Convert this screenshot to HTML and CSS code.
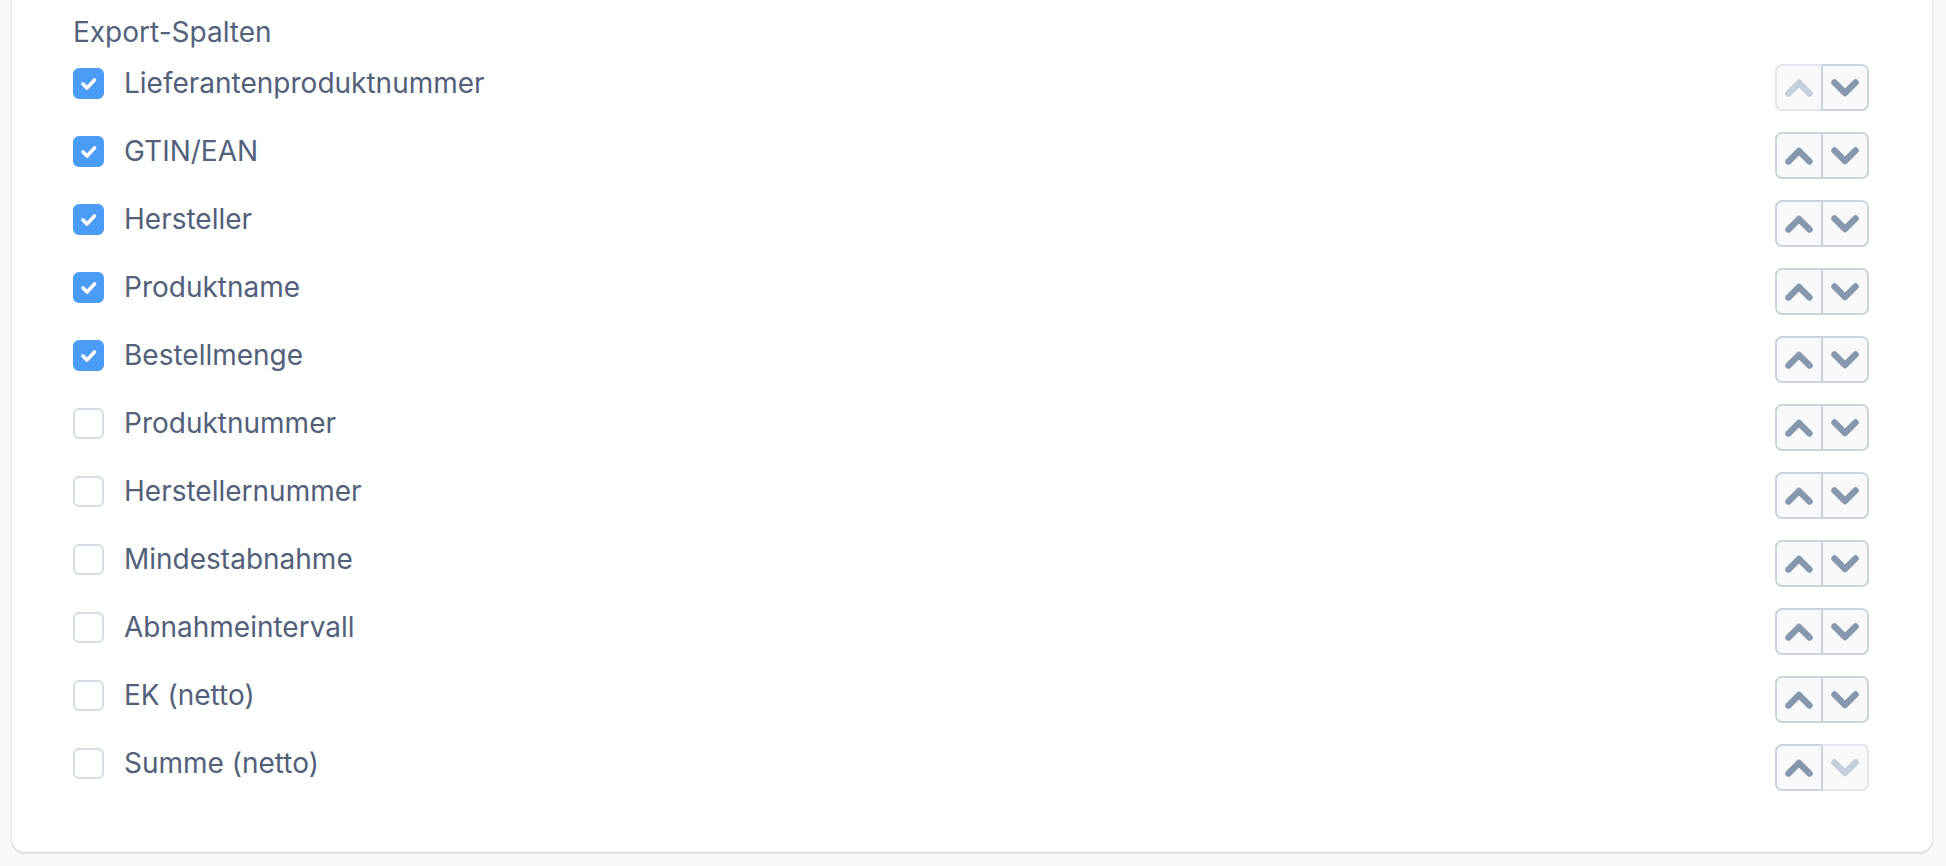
FILE: index.html
```html
<!DOCTYPE html>
<html lang="de">
<head>
<meta charset="utf-8">
<title>Export-Spalten</title>
<link rel="stylesheet" href="styles.css">
</head>
<body>
<div class="card">
  <div class="heading">Export-Spalten</div>
  <ul class="list">
    <li class="row">
      <label class="item"><span class="box checked"><svg viewBox="0 0 31 31" width="31" height="31"><polyline points="10,16 14,20 21.5,12" /></svg></span><span class="text">Lieferantenproduktnummer</span></label>
      <div class="order"><button class="btn disabled"><svg viewBox="0 0 28 18" width="28" height="18"><polyline points="3.5,14.5 14,4 24.5,14.5"/></svg></button><button class="btn"><svg viewBox="0 0 28 18" width="28" height="18"><polyline points="3.5,3.5 14,14 24.5,3.5"/></svg></button></div>
    </li>
    <li class="row">
      <label class="item"><span class="box checked"><svg viewBox="0 0 31 31" width="31" height="31"><polyline points="10,16 14,20 21.5,12" /></svg></span><span class="text">GTIN/EAN</span></label>
      <div class="order"><button class="btn"><svg viewBox="0 0 28 18" width="28" height="18"><polyline points="3.5,14.5 14,4 24.5,14.5"/></svg></button><button class="btn"><svg viewBox="0 0 28 18" width="28" height="18"><polyline points="3.5,3.5 14,14 24.5,3.5"/></svg></button></div>
    </li>
    <li class="row">
      <label class="item"><span class="box checked"><svg viewBox="0 0 31 31" width="31" height="31"><polyline points="10,16 14,20 21.5,12" /></svg></span><span class="text">Hersteller</span></label>
      <div class="order"><button class="btn"><svg viewBox="0 0 28 18" width="28" height="18"><polyline points="3.5,14.5 14,4 24.5,14.5"/></svg></button><button class="btn"><svg viewBox="0 0 28 18" width="28" height="18"><polyline points="3.5,3.5 14,14 24.5,3.5"/></svg></button></div>
    </li>
    <li class="row">
      <label class="item"><span class="box checked"><svg viewBox="0 0 31 31" width="31" height="31"><polyline points="10,16 14,20 21.5,12" /></svg></span><span class="text">Produktname</span></label>
      <div class="order"><button class="btn"><svg viewBox="0 0 28 18" width="28" height="18"><polyline points="3.5,14.5 14,4 24.5,14.5"/></svg></button><button class="btn"><svg viewBox="0 0 28 18" width="28" height="18"><polyline points="3.5,3.5 14,14 24.5,3.5"/></svg></button></div>
    </li>
    <li class="row">
      <label class="item"><span class="box checked"><svg viewBox="0 0 31 31" width="31" height="31"><polyline points="10,16 14,20 21.5,12" /></svg></span><span class="text">Bestellmenge</span></label>
      <div class="order"><button class="btn"><svg viewBox="0 0 28 18" width="28" height="18"><polyline points="3.5,14.5 14,4 24.5,14.5"/></svg></button><button class="btn"><svg viewBox="0 0 28 18" width="28" height="18"><polyline points="3.5,3.5 14,14 24.5,3.5"/></svg></button></div>
    </li>
    <li class="row">
      <label class="item"><span class="box"></span><span class="text">Produktnummer</span></label>
      <div class="order"><button class="btn"><svg viewBox="0 0 28 18" width="28" height="18"><polyline points="3.5,14.5 14,4 24.5,14.5"/></svg></button><button class="btn"><svg viewBox="0 0 28 18" width="28" height="18"><polyline points="3.5,3.5 14,14 24.5,3.5"/></svg></button></div>
    </li>
    <li class="row">
      <label class="item"><span class="box"></span><span class="text">Herstellernummer</span></label>
      <div class="order"><button class="btn"><svg viewBox="0 0 28 18" width="28" height="18"><polyline points="3.5,14.5 14,4 24.5,14.5"/></svg></button><button class="btn"><svg viewBox="0 0 28 18" width="28" height="18"><polyline points="3.5,3.5 14,14 24.5,3.5"/></svg></button></div>
    </li>
    <li class="row">
      <label class="item"><span class="box"></span><span class="text">Mindestabnahme</span></label>
      <div class="order"><button class="btn"><svg viewBox="0 0 28 18" width="28" height="18"><polyline points="3.5,14.5 14,4 24.5,14.5"/></svg></button><button class="btn"><svg viewBox="0 0 28 18" width="28" height="18"><polyline points="3.5,3.5 14,14 24.5,3.5"/></svg></button></div>
    </li>
    <li class="row">
      <label class="item"><span class="box"></span><span class="text">Abnahmeintervall</span></label>
      <div class="order"><button class="btn"><svg viewBox="0 0 28 18" width="28" height="18"><polyline points="3.5,14.5 14,4 24.5,14.5"/></svg></button><button class="btn"><svg viewBox="0 0 28 18" width="28" height="18"><polyline points="3.5,3.5 14,14 24.5,3.5"/></svg></button></div>
    </li>
    <li class="row">
      <label class="item"><span class="box"></span><span class="text">EK (netto)</span></label>
      <div class="order"><button class="btn"><svg viewBox="0 0 28 18" width="28" height="18"><polyline points="3.5,14.5 14,4 24.5,14.5"/></svg></button><button class="btn"><svg viewBox="0 0 28 18" width="28" height="18"><polyline points="3.5,3.5 14,14 24.5,3.5"/></svg></button></div>
    </li>
    <li class="row">
      <label class="item"><span class="box"></span><span class="text">Summe (netto)</span></label>
      <div class="order"><button class="btn"><svg viewBox="0 0 28 18" width="28" height="18"><polyline points="3.5,14.5 14,4 24.5,14.5"/></svg></button><button class="btn disabled"><svg viewBox="0 0 28 18" width="28" height="18"><polyline points="3.5,3.5 14,14 24.5,3.5"/></svg></button></div>
    </li>
  </ul>
</div>
</body>
</html>
```

FILE: styles.css
```css
html, body {
  margin: 0;
  padding: 0;
}

body {
  background: #f7f8fa;
  font-family: Inter, "Noto Sans", "Liberation Sans", sans-serif;
  color: #4f5d73;
}

.card {
  background: #ffffff;
  margin: 0 14px 14px 12px;
  padding: 14px 63px 61px 61px;
  border-radius: 0 0 13px 13px;
  box-shadow: 0 1px 3px rgba(0, 0, 0, 0.16), 0 0 0 1px rgba(0, 0, 0, 0.03);
}

.heading {
  font-size: 28px;
  line-height: 36px;
  margin-bottom: 14px;
  color: #53627a;
}

.list {
  list-style: none;
  margin: 0;
  padding: 0;
  display: flex;
  flex-direction: column;
  gap: 21px;
}

.row {
  display: flex;
  align-items: flex-start;
  justify-content: space-between;
  height: 47px;
}

.item {
  display: flex;
  align-items: center;
  gap: 20px;
  height: 36px;
  padding-top: 1px;
}

.box {
  width: 31px;
  height: 31px;
  box-sizing: border-box;
  border: 2px solid #d5dce5;
  border-radius: 6px;
  background: #ffffff;
  display: flex;
}

.box.checked {
  background: #4b9cf6;
  border-color: #4b9cf6;
}

.box svg {
  margin: -2px;
  fill: none;
  stroke: #ffffff;
  stroke-width: 3.6;
  stroke-linecap: round;
  stroke-linejoin: round;
}

.text {
  font-size: 28px;
  line-height: 36px;
  color: #52607a;
}

.order {
  display: flex;
}

.btn {
  width: 47px;
  height: 47px;
  margin: 0;
  padding: 0;
  background: #f7f9fb;
  border: 2px solid #cbd3dd;
  display: flex;
  align-items: center;
  justify-content: center;
  box-sizing: border-box;
}

.btn:first-child {
  border-radius: 7px 0 0 7px;
  border-right-width: 1px;
}

.btn:last-child {
  border-radius: 0 7px 7px 0;
  border-left-width: 1px;
}

.btn svg {
  fill: none;
  stroke: #8797ad;
  stroke-width: 6.5;
  stroke-linecap: round;
  stroke-linejoin: round;
}

.btn.disabled {
  border-color: #e1e6ec;
}

.btn.disabled:first-child {
  border-right-color: #cbd3dd;
}

.btn.disabled:last-child {
  border-left-color: #cbd3dd;
}

.btn.disabled svg {
  stroke: #c6cfd9;
}
```
